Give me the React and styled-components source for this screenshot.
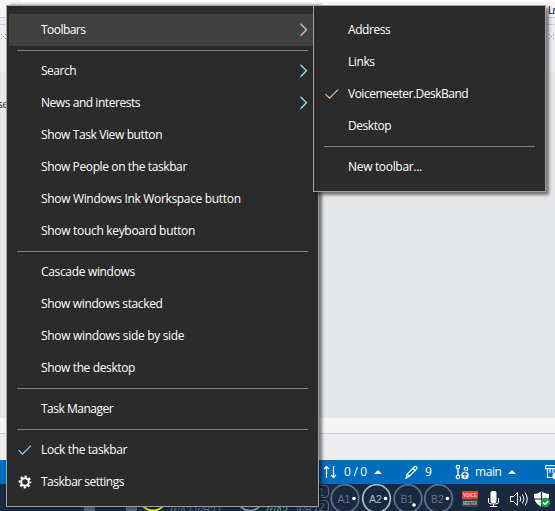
import React from "react";
import styled, { createGlobalStyle } from "styled-components";

const Global = createGlobalStyle`
  *{box-sizing:border-box}
  body{margin:0;overflow:hidden;font-family:"Open Sans","Noto Sans",sans-serif}
`;
const Desktop = styled.main`
  position:relative;width:555px;height:511px;overflow:hidden;
  display:flex;flex-direction:column;background:#e6e7e9;
`;
const TitleStrip = styled.div`height:2px;margin-left:22px;background:#fff;`;
const TitleBack = styled.div`background:#f5f5f5;`;
const TabStrip = styled.div`
  height:15px;background:#f5f5f5;display:flex;justify-content:flex-end;
  font:11px/16px "Liberation Sans",sans-serif;color:#2a1a3c;
`;
const TabText = styled.span`width:7px;white-space:nowrap;letter-spacing:-1.5px;`;
const ToolStrip = styled.div`height:8px;background:#eeeef2;border:solid #cccedb;border-width:1px 0;`;
const GripStrip = styled.div`
  height:47px;background:#eeeef2;display:flex;justify-content:space-between;padding-top:8px;
`;
const Editor = styled.div`height:346px;background:#e6e7e9;padding-top:25px;`;
const EditorText = styled.span`
  display:block;margin-left:-2px;white-space:nowrap;letter-spacing:-.3px;
  font:10px/14px "Open Sans",sans-serif;color:#1e1e1e;
`;
const PanelEdge = styled.div`height:15px;background:#f5f5f5;`;
const Panel = styled.div`height:27px;background:#eeeef2;border-top:1px solid #cccedb;`;
const StatusBar = styled.div`
  height:24px;background:#006cbe;color:#fff;display:flex;align-items:center;padding-left:323px;
  font:12px/24px "Open Sans",sans-serif;
`;
const StatusItem = styled.div`
  display:flex;align-items:center;flex:none;height:24px;width:${p => p.$w}px;
  white-space:nowrap;letter-spacing:${p => p.$ls || 0}px;
`;
const StatusText = styled.span`margin:0 ${p => p.$r || 0}px 0 ${p => p.$l || 0}px;`;
const Taskbar = styled.div`height:27px;background:#1a2940;display:flex;`;

const Menu = styled.nav`
  position:absolute;left:${p => p.$x}px;top:5px;width:${p => p.$w}px;
  padding:8px ${p => p.$right}px 8px 2px;background:#2b2b2b;border:1px solid #a0a0a0;
  box-shadow:3px ${p => p.$drop}px 3px rgba(0,0,0,.5);color:#fff;
`;
const Item = styled.div`
  height:32px;display:flex;align-items:center;background:${p => p.$on ? "#414141" : "transparent"};
`;
const IconCell = styled.span`width:32px;height:32px;flex:none;display:block;`;
const Label = styled.span`
  flex:1;white-space:nowrap;font-size:12px;line-height:32px;
  letter-spacing:${p => p.$ls || 0}px;
`;
const Rule = styled.hr`
  height:1px;margin:4px ${p => p.$r}px 4px 8px;border:0;background:#808080;
`;

const Check = ({ warm }) => (
  <svg width="32" height="32" fill="none">
    <path d="M9.5 16.2l4 4L22 11.7" stroke={warm ? "#e8bd94" : "#a5ccf5"} strokeWidth="1.2" />
  </svg>
);
const Chevron = ({ warm }) => (
  <svg width="20" height="32" fill="none">
    <path d="M6.5 9.8l6 6-6 6" stroke={warm ? "#f3bd98" : "#9bdcf0"} strokeWidth="1.3" />
  </svg>
);
const Gear = () => (
  <svg width="32" height="32" fill="none" stroke="#fff">
    <circle cx="16" cy="16" r="3.8" strokeWidth="2" />
    <circle cx="16" cy="16" r="5.4" strokeWidth="2" strokeDasharray="2.2 2.04" strokeDashoffset="1.1" />
  </svg>
);
const Arrows = () => (
  <svg width="14" height="24" fill="none" stroke="#fff" strokeWidth="1.2">
    <path d="M3.5 18V6.5M1 9l2.5-2.5L6 9M10.5 6v11.5M8 15l2.5 2.5L13 15" />
  </svg>
);
const Up = () => <svg width="8" height="24"><path d="M0 14l4-4 4 4z" fill="#fff" /></svg>;
const Pencil = () => (
  <svg width="13" height="24" fill="none" stroke="#fff" strokeWidth="1.2">
    <path d="M1 18l1.2-4 7-7c1.5-1.5 3.8.5 2.2 2.2l-7 7zM8 8.5l2.5 2.5M2.2 14l2.3 2.3" />
  </svg>
);
const Branch = () => (
  <svg width="15" height="24" fill="none" stroke="#fff" strokeWidth="1.3">
    <circle cx="3" cy="7" r="1.7" /><circle cx="3" cy="17" r="1.7" /><circle cx="11" cy="9" r="1.7" />
    <path d="M3 9v6" />
    <circle cx="10" cy="15.5" r="4.4" fill="#fff" stroke="#006cbe" />
    <path d="M10 18.3v-5M7.8 15.2l2.2-2.2 2.2 2.2" stroke="#006cbe" strokeWidth="1.2" />
  </svg>
);
const Repo = () => (
  <svg width="12" height="24" fill="none" stroke="#fff" strokeWidth="1.2">
    <path d="M.6 5.6H12M.6 5.6v3H12M2.5 9v8.5H8M5 9v4M8 9v4" />
    <circle cx="11" cy="16" r="3.5" fill="#fff" stroke="none" />
  </svg>
);
const Knob = ({ x, name, color, dx = 9, dy = 0 }) => (
  <g>
    <circle cx={x} cy="14.5" r="13.8" fill="none" stroke={color} strokeWidth="1.7" />
    <text x={x - 1} y="18.5" fill={color} fontSize="10.5" textAnchor="middle">{name}</text>
    <circle cx={x + dx} cy={14.5 + dy} r="1.8" fill="#fff" />
  </g>
);
const DeskBand = () => (
  <svg width="456" height="27" fontFamily="Liberation Sans">
    <path d="M84 20h11v7H84zM126 20h11v7h-11z" fill="#52637a" />
    <circle cx="153" cy="13.3" r="13.2" fill="none" stroke="#e0ef20" strokeWidth="2" />
    <circle cx="250" cy="13.3" r="13.2" fill="none" stroke="#86a9ae" strokeWidth="1.7" />
    <g fontSize="10" fontStyle="italic" fill="#60758a">
      <text x="170" y="30">(r/A2 |r/B2 |</text>
      <text x="266" y="30" fill="#5dbb78">(r/A2</text>
      <text x="296" y="30">|r/B2</text>
    </g>
    <g fill="none" stroke="#52677a" strokeWidth="1.2">
      <rect x="300" y="1.5" width="28.5" height="12" rx="4" />
      <rect x="300" y="16.5" width="28.5" height="12" rx="4" />
    </g>
    <g fontSize="10.5" fill="#60758a"><text x="318.5" y="11.5">1</text><text x="318.5" y="26.5">2</text></g>
    <Knob x={345} name="A1" color="#5c7489" />
    <Knob x={376.5} name="A2" color="#9dc0c7" />
    <Knob x={408} name="B1" color="#5c7489" dx={6} dy={6.5} />
    <Knob x={438.5} name="B2" color="#5c7489" />
  </svg>
);
const MeterLogo = () => (
  <svg width="22" height="27" fontFamily="Liberation Sans" fontWeight="bold" fontSize="5.5">
    <path d="M6 7h16v8H6z" fill="#e8412f" />
    <path d="M6 15h16v8H6z" fill="#3d4248" />
    <text x="7" y="13" fill="#ffd2cc" textLength="14" lengthAdjust="spacingAndGlyphs">VOICE</text>
    <text x="7" y="21" fill="#b9bcc0" textLength="14" lengthAdjust="spacingAndGlyphs">MEETER</text>
  </svg>
);
const TrayIcons = () => (
  <svg width="77" height="27" fill="none" stroke="#fff">
    <rect x="12.5" y="7" width="6" height="12" rx="2" fill="#fff" stroke="none" />
    <path d="M10.5 14v4.5c0 2 10 2 10 0V14M15.5 20v2.5M12 22.5h7" />
    <path d="M32.5 12.5h3l4-4v13l-4-4h-3zM42 12.5q1.5 2.5 0 5M44.5 10.5q3 4.5 0 9M47 8.5q4.5 6.5 0 13" />
    <path d="M56 10q4-.2 7.5-2.5Q67 9.8 71 10c.3 6-2 10-7.5 13C58 20 55.7 16 56 10z" fill="#fff" stroke="none" />
    <path d="M63.5 8v15M56 15h15" stroke="#1a2940" strokeWidth="1.2" />
    <circle cx="67.5" cy="18.5" r="4.7" fill="#169b4a" stroke="none" />
    <path d="M65 18.5l2 2 3.3-3.5" strokeWidth="1.3" />
  </svg>
);
const Grip = () => (
  <svg width="7" height="8" fill="#9b9ba8">
    <path d="M1 1h1v1H1zM5 1h1v1H5zM3 3h1v1H3zM1 5h1v1H1zM5 5h1v1H5z" />
  </svg>
);

const mainItems = [
  { t: "Toolbars", ls: -.55, sub: true, on: true }, null,
  { t: "Search", ls: -.5, sub: true },
  { t: "News and interests", ls: -.45, sub: true },
  { t: "Show Task View button", ls: -.38 },
  { t: "Show People on the taskbar", ls: -.39 },
  { t: "Show Windows Ink Workspace button", ls: -.33 },
  { t: "Show touch keyboard button", ls: -.31 }, null,
  { t: "Cascade windows", ls: -.33 },
  { t: "Show windows stacked", ls: -.36 },
  { t: "Show windows side by side", ls: -.32 },
  { t: "Show the desktop", ls: -.37 }, null,
  { t: "Task Manager", ls: -.5 }, null,
  { t: "Lock the taskbar", ls: -.38, icon: <Check /> },
  { t: "Taskbar settings", ls: -.5, icon: <Gear /> },
];
const subItems = [
  { t: "Address", ls: -.45 }, { t: "Links", ls: -.4 },
  { t: "Voicemeeter.DeskBand", ls: -.5, icon: <Check warm /> },
  { t: "Desktop", ls: -.45 }, null, { t: "New toolbar...", ls: -.32 },
];
const PopupMenu = ({ items, x, w, right, ruleRight, drop }) => (
  <Menu $x={x} $w={w} $right={right} $drop={drop}>
    {items.map((it, i) => it ? (
      <Item key={i} $on={it.on}>
        <IconCell>{it.icon}</IconCell>
        <Label $ls={it.ls}>{it.t}</Label>
        {it.sub && <Chevron warm={it.on} />}
      </Item>
    ) : <Rule key={i} $r={ruleRight} />)}
  </Menu>
);

export default function App() {
  return (
    <>
      <Global />
      <Desktop>
        <TitleBack><TitleStrip /></TitleBack>
        <TabStrip><TabText>Ln</TabText></TabStrip>
        <ToolStrip />
        <GripStrip><Grip /><Grip /></GripStrip>
        <Editor><EditorText>se</EditorText></Editor>
        <PanelEdge />
        <Panel />
        <StatusBar>
          <StatusItem $w={82} $ls={-.3}><Arrows /><StatusText $l={7} $r={7}>0 / 0</StatusText><Up /></StatusItem>
          <StatusItem $w={50}><Pencil /><StatusText $l={7}>9</StatusText></StatusItem>
          <StatusItem $w={90} $ls={-.4}><Branch /><StatusText $l={5} $r={6}>main</StatusText><Up /></StatusItem>
          <Repo />
        </StatusBar>
        <Taskbar><DeskBand /><MeterLogo /><TrayIcons /></Taskbar>
        <PopupMenu items={mainItems} x={6} w={313} right={4} ruleRight={6} drop={0} />
        <PopupMenu items={subItems} x={313} w={233} right={2} ruleRight={8} drop={3} />
      </Desktop>
    </>
  );
}
